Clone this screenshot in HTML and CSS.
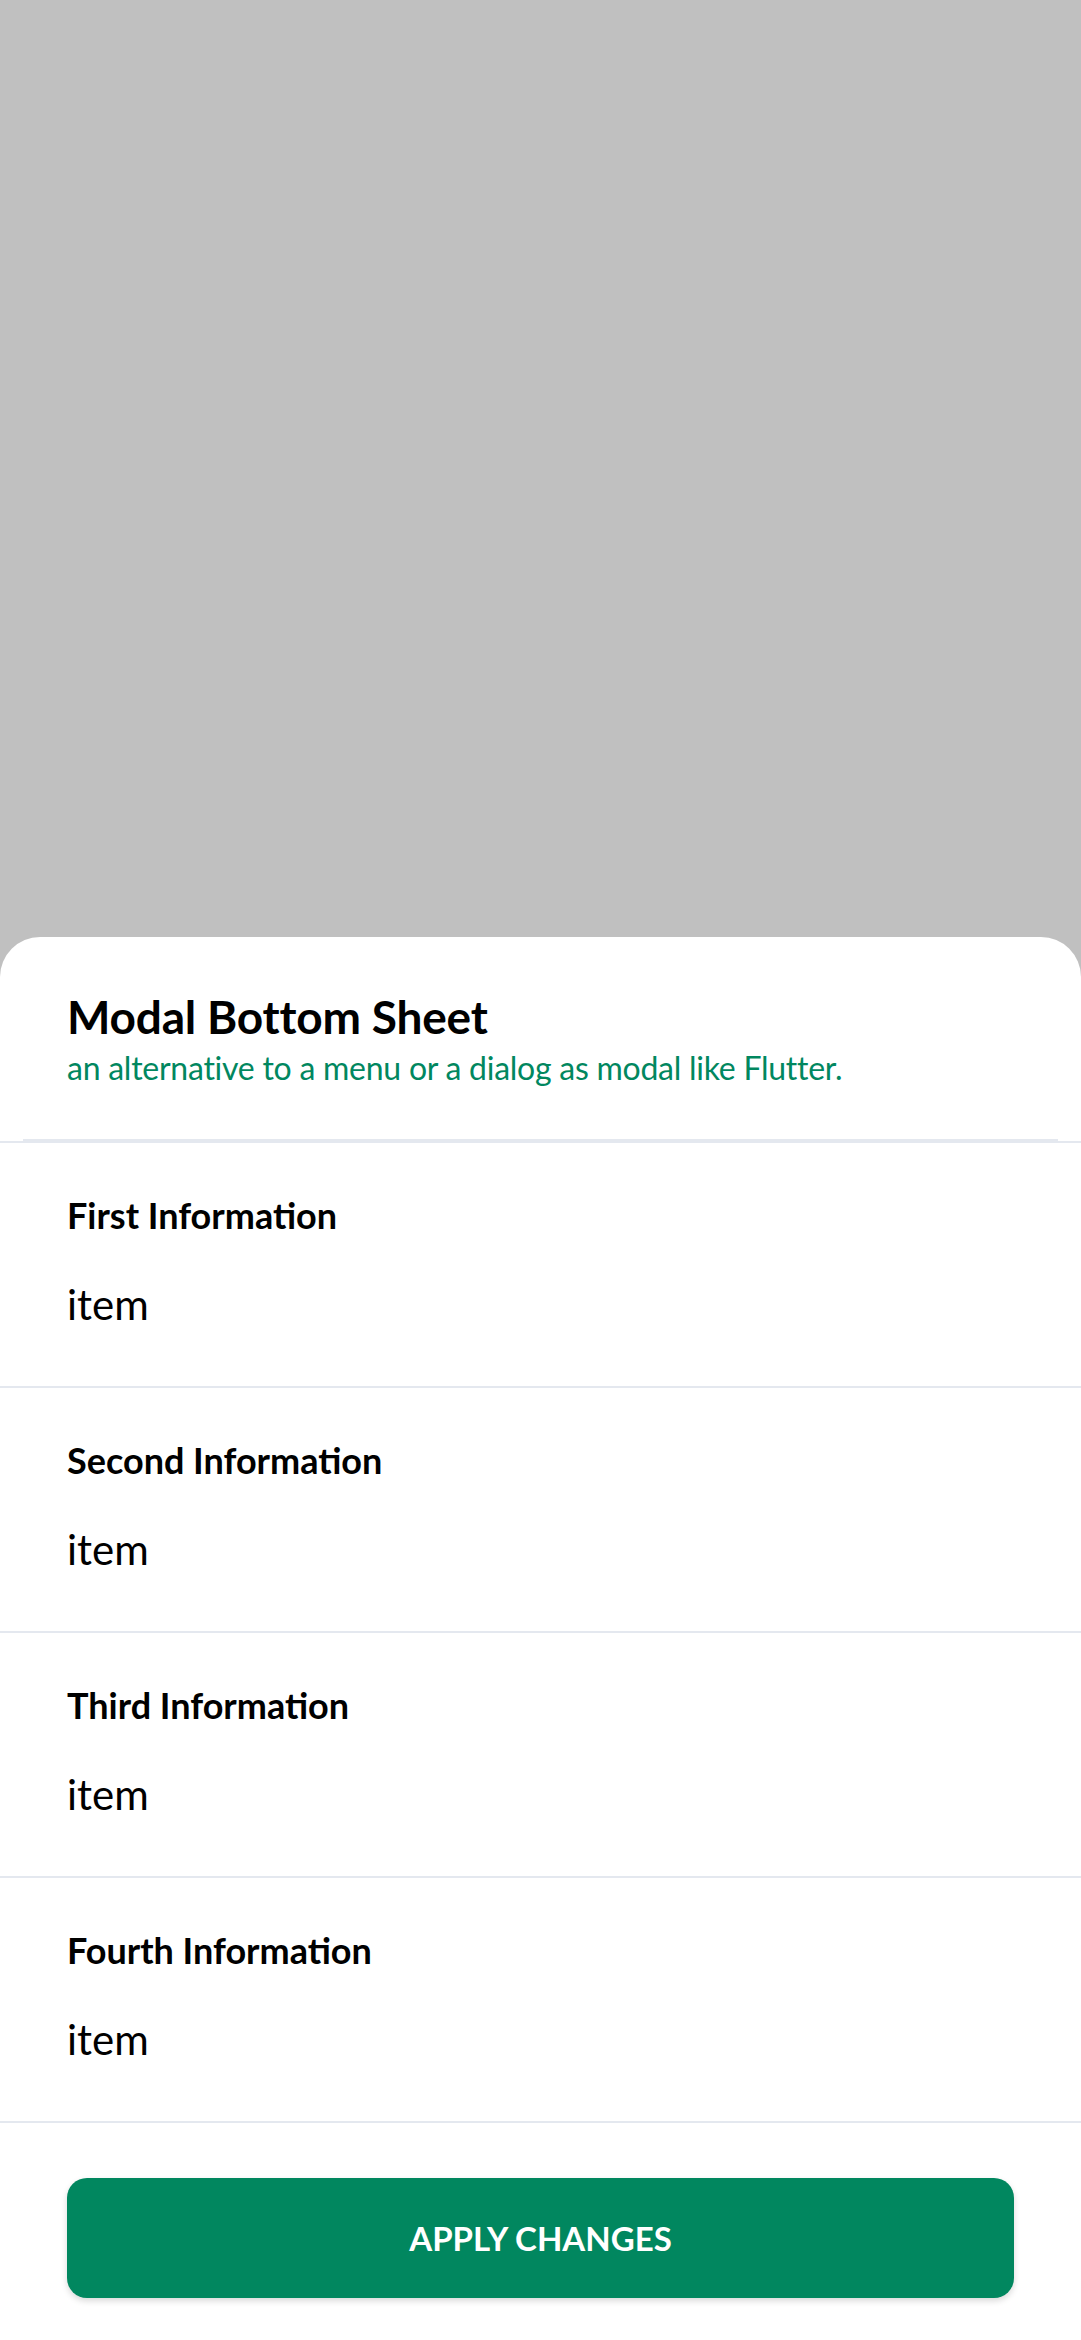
FILE: index.html
```html
<!DOCTYPE html>
<html lang="en">
<head>
<meta charset="utf-8">
<title>Modal Bottom Sheet</title>
<link rel="stylesheet" href="styles.css">
</head>
<body>
<div class="backdrop">
  <section class="sheet">
    <header class="sheet-header">
      <h1 class="sheet-title">Modal Bottom Sheet</h1>
      <p class="sheet-subtitle">an alternative to a menu or a dialog as modal like Flutter.</p>
    </header>
    <div class="sheet-list">
      <div class="info">
        <h2 class="info-title">First Information</h2>
        <p class="info-item">item</p>
      </div>
      <div class="info">
        <h2 class="info-title">Second Information</h2>
        <p class="info-item">item</p>
      </div>
      <div class="info">
        <h2 class="info-title">Third Information</h2>
        <p class="info-item">item</p>
      </div>
      <div class="info">
        <h2 class="info-title">Fourth Information</h2>
        <p class="info-item">item</p>
      </div>
    </div>
    <div class="sheet-actions">
      <button class="apply-btn" type="button">APPLY CHANGES</button>
    </div>
  </section>
</div>
</body>
</html>
```

FILE: styles.css
```css
* { box-sizing: border-box; }
html, body { margin: 0; padding: 0; }
body {
  background: #c0c0c0;
  font-family: Lato, "Noto Sans", sans-serif;
  color: #000;
}
.backdrop {
  min-height: 100vh;
  display: flex;
  flex-direction: column;
  justify-content: flex-end;
}
.sheet {
  background: #fff;
  border-radius: 40px 40px 0 0;
  display: flex;
  flex-direction: column;
}
.sheet-header {
  margin: 0 23px;
  padding: 51px 44px 50px;
  border-bottom: 2px solid #e4e8ef;
}
.sheet-title {
  margin: 0;
  font-size: 46px;
  line-height: 58px;
  font-weight: 700;
  letter-spacing: -0.2px;
}
.sheet-subtitle {
  margin: 0;
  font-size: 32px;
  line-height: 43px;
  letter-spacing: -0.25px;
  color: #01875f;
}
.sheet-list {
  border-top: 2px solid #e4e8ef;
}
.info {
  padding: 49px 67px 57px;
  border-bottom: 2px solid #e4e8ef;
}
.info-title {
  margin: 0 0 41px;
  font-size: 36px;
  line-height: 47px;
  font-weight: 700;
}
.info-item {
  margin: 0;
  font-size: 42px;
  line-height: 49px;
}
.sheet-actions {
  padding: 55px 67px 42px;
}
.apply-btn {
  display: block;
  width: 100%;
  height: 120px;
  border: 0;
  border-radius: 20px;
  background: #01875f;
  color: #fff;
  font-family: Lato, "Noto Sans", sans-serif;
  font-size: 33px;
  font-weight: 700;
  box-shadow: 0 3px 6px rgba(0,0,0,0.15);
}
```
